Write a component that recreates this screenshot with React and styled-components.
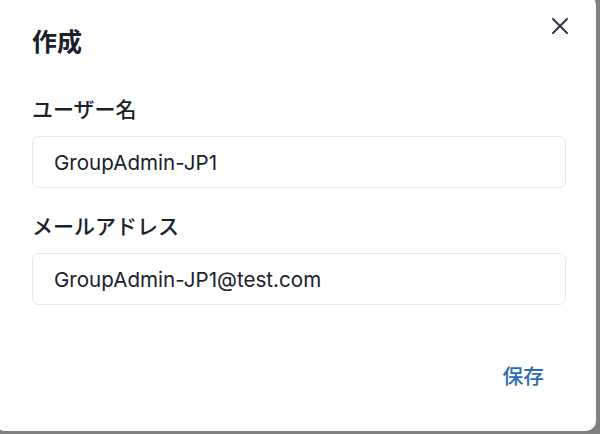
import React from 'react';
import styled, { createGlobalStyle } from 'styled-components';

const GlobalStyle = createGlobalStyle`
  html, body {
    margin: 0;
    padding: 0;
    background: #808080;
    overflow: hidden;
  }
  body {
    font-family: "Inter", "Noto Sans CJK JP", sans-serif;
    color: #1a202c;
  }
`;

const Modal = styled.section`
  position: relative;
  box-sizing: border-box;
  width: 601px;
  height: 436px;
  margin: -5px 0 0 -5px;
  padding: 31px 30px 0 37px;
  background: #ffffff;
  border-radius: 10px;
  display: flex;
  flex-direction: column;
`;

const Title = styled.h2`
  margin: 0;
  font-size: 25px;
  line-height: 32px;
  font-weight: 600;
`;

const CloseButton = styled.button`
  position: absolute;
  top: 16px;
  right: 21px;
  width: 30px;
  height: 30px;
  padding: 0;
  border: none;
  background: transparent;
  display: flex;
  align-items: center;
  justify-content: center;
  color: #2d3748;
  cursor: pointer;
`;

const Body = styled.div`
  display: flex;
  flex-direction: column;
  gap: 25px;
  margin-top: 38px;
`;

const Field = styled.div`
  display: flex;
  flex-direction: column;
  gap: 12px;
`;

const Label = styled.label`
  font-size: 21px;
  line-height: 28px;
  font-weight: 500;
`;

const Input = styled.input`
  box-sizing: border-box;
  width: 100%;
  height: 52px;
  padding: 0 21px;
  border: 1px solid #e2e8f0;
  border-radius: 7px;
  font-family: inherit;
  font-size: 20.6px;
  color: #1a202c;
  background: #ffffff;
  outline: none;
`;

const Footer = styled.div`
  display: flex;
  justify-content: flex-end;
  margin-top: 44px;
`;

const SaveButton = styled.button`
  height: 52px;
  padding: 0 22px 0 21px;
  border: none;
  background: transparent;
  font-family: inherit;
  font-size: 20.8px;
  font-weight: 500;
  color: #2b6cb0;
  border-radius: 7px;
  cursor: pointer;
`;

const CloseIcon = () => (
  <svg width="16" height="16" viewBox="0 0 16 16" fill="none">
    <path d="M1 1L15 15M15 1L1 15" stroke="currentColor" strokeWidth="2" strokeLinecap="round" />
  </svg>
);

const App = () => {
  return (
    <>
      <GlobalStyle />
      <Modal>
        <Title>作成</Title>
        <CloseButton aria-label="閉じる">
          <CloseIcon />
        </CloseButton>
        <Body>
          <Field>
            <Label>ユーザー名</Label>
            <Input defaultValue="GroupAdmin-JP1" />
          </Field>
          <Field>
            <Label>メールアドレス</Label>
            <Input defaultValue="GroupAdmin-JP1@test.com" />
          </Field>
        </Body>
        <Footer>
          <SaveButton>保存</SaveButton>
        </Footer>
      </Modal>
    </>
  );
};

export default App;
